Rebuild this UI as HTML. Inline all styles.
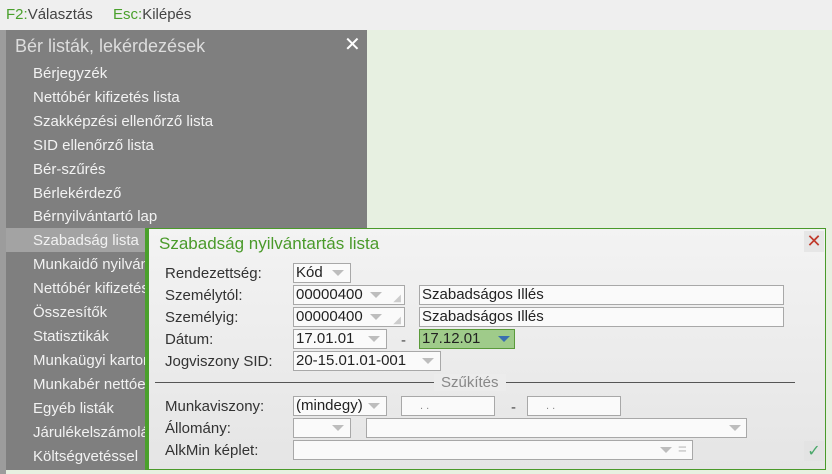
<!DOCTYPE html>
<html><head><meta charset="utf-8"><style>
*{margin:0;padding:0;box-sizing:border-box}
body{width:832px;height:474px;overflow:hidden;background:#e7f0e1;font-family:"Liberation Sans",sans-serif;position:relative}
.top{position:absolute;left:0;top:0;width:832px;height:30px;background:#efefef;font-size:15px;color:#444}
.top span{position:absolute;top:6px}
.g{color:#4aa02c}
.strip{position:absolute;left:0;top:30px;width:6px;height:444px;background:#9c9c9c}
.menu{position:absolute;left:6px;top:30px;width:361px;height:440px;background:#7f7f7f;color:#f2f2f2}
.menu .h{position:absolute;left:9px;top:6px;font-size:18px;color:#ddd}
.menu .x{position:absolute;left:338px;top:2px;font-size:20px;color:#fff}
.menu .i{position:absolute;left:27px;font-size:15px}
.hl{position:absolute;left:0;top:198px;width:361px;height:24px;background:#a3a3a3}
.dlg{position:absolute;left:145px;top:228px;width:681px;height:242px;background:linear-gradient(#f3f3f3,#e5e5e5);border:1px solid #4a9a2a;border-left:4px solid #4aa02c}
.t{position:absolute;left:10px;top:5px;font-size:17px;color:#4a9a2a}
.l{position:absolute;left:16px;font-size:15px;color:#333}
.f{position:absolute;height:20px;border:1px solid #a8a8a8;background:#fafafa;font-size:15px;color:#222;padding-left:2px;line-height:18px}
.ar{position:absolute;width:0;height:0;border-left:6px solid transparent;border-right:6px solid transparent;border-top:6px solid #bdbdbd;top:6px}
.d{position:absolute;font-size:15px;color:#444}
</style></head><body>
<div class="top"><span style="left:6px"><span class="g" style="position:static">F2:</span>Választás</span><span style="left:113px"><span class="g" style="position:static">Esc:</span>Kilépés</span></div>
<div class="strip"></div>
<div class="menu">
<div class="hl"></div>
<div class="h">Bér listák, lekérdezések</div><div class="x">✕</div>
<div class="i" style="top:35px">Bérjegyzék</div>
<div class="i" style="top:59px">Nettóbér kifizetés lista</div>
<div class="i" style="top:83px">Szakképzési ellenőrző lista</div>
<div class="i" style="top:107px">SID ellenőrző lista</div>
<div class="i" style="top:131px">Bér-szűrés</div>
<div class="i" style="top:155px">Bérlekérdező</div>
<div class="i" style="top:178px">Bérnyilvántartó lap</div>
<div class="i" style="top:202px">Szabadság lista</div>
<div class="i" style="top:226px">Munkaidő nyilvántartás</div>
<div class="i" style="top:250px">Nettóbér kifizetés</div>
<div class="i" style="top:274px">Összesítők</div>
<div class="i" style="top:298px">Statisztikák</div>
<div class="i" style="top:322px">Munkaügyi karton</div>
<div class="i" style="top:346px">Munkabér nettóe</div>
<div class="i" style="top:370px">Egyéb listák</div>
<div class="i" style="top:394px">Járulékelszámolás</div>
<div class="i" style="top:418px">Költségvetéssel</div>
</div>
<div class="dlg">
<div class="t">Szabadság nyilvántartás lista</div>
<div style="position:absolute;left:655px;top:2px;font-size:18px;color:#c0392b;background:#e6e6e6;width:20px;text-align:center">✕</div>
<div class="l" style="top:36px">Rendezettség:</div>
<div class="l" style="top:58px">Személytól:</div>
<div class="l" style="top:80px">Személyig:</div>
<div class="l" style="top:102px">Dátum:</div>
<div class="l" style="top:124px">Jogviszony SID:</div>
<div class="f" style="left:144px;top:34px;width:58px">Kód<i class="ar" style="left:38px"></i></div>
<div class="f" style="left:144px;top:56px;width:112px">00000400<i class="ar" style="left:76px"></i><span style="position:absolute;right:3px;top:4px;color:#ccc;font-size:10px">◢</span></div>
<div class="f" style="left:144px;top:78px;width:112px">00000400<i class="ar" style="left:76px"></i><span style="position:absolute;right:3px;top:4px;color:#ccc;font-size:10px">◢</span></div>
<div class="f" style="left:270px;top:56px;width:365px">Szabadságos Illés</div>
<div class="f" style="left:270px;top:78px;width:365px">Szabadságos Illés</div>
<div class="f" style="left:144px;top:100px;width:94px">17.01.01<i class="ar" style="left:74px"></i></div>
<div class="d" style="left:252px;top:103px">-</div>
<div class="f" style="left:270px;top:100px;width:96px;background:#9fcb8a;border-color:#5a9a3a">17.12.01<i class="ar" style="left:78px;border-top-color:#3a6fb0"></i></div>
<div class="f" style="left:144px;top:122px;width:148px">20-15.01.01-001<i class="ar" style="left:128px"></i></div>
<div style="position:absolute;left:6px;top:153px;width:640px;height:1px;background:#555"></div>
<div style="position:absolute;left:285px;top:145px;background:#ececec;padding:0 7px;font-size:15px;color:#888">Szűkítés</div>
<div class="l" style="top:169px">Munkaviszony:</div>
<div class="l" style="top:191px">Állomány:</div>
<div class="l" style="top:213px">AlkMin képlet:</div>
<div class="f" style="left:144px;top:167px;width:94px">(mindegy)<i class="ar" style="left:74px"></i></div>
<div class="f" style="left:252px;top:167px;width:94px;font-size:11px;color:#888;padding-left:18px">. .</div>
<div class="d" style="left:362px;top:170px">-</div>
<div class="f" style="left:378px;top:167px;width:94px;font-size:11px;color:#888;padding-left:18px">. .</div>
<div class="f" style="left:144px;top:189px;width:58px"><i class="ar" style="left:38px"></i></div>
<div class="f" style="left:217px;top:189px;width:381px"><i class="ar" style="left:362px"></i></div>
<div class="f" style="left:144px;top:211px;width:400px"><i class="ar" style="left:366px"></i><span style="position:absolute;left:384px;top:0;color:#bbb">=</span></div>
<div style="position:absolute;left:655px;top:212px;font-size:16px;color:#4aa86a;background:#e3e3e3;width:20px;text-align:center">✓</div>
</div>
</body></html>
